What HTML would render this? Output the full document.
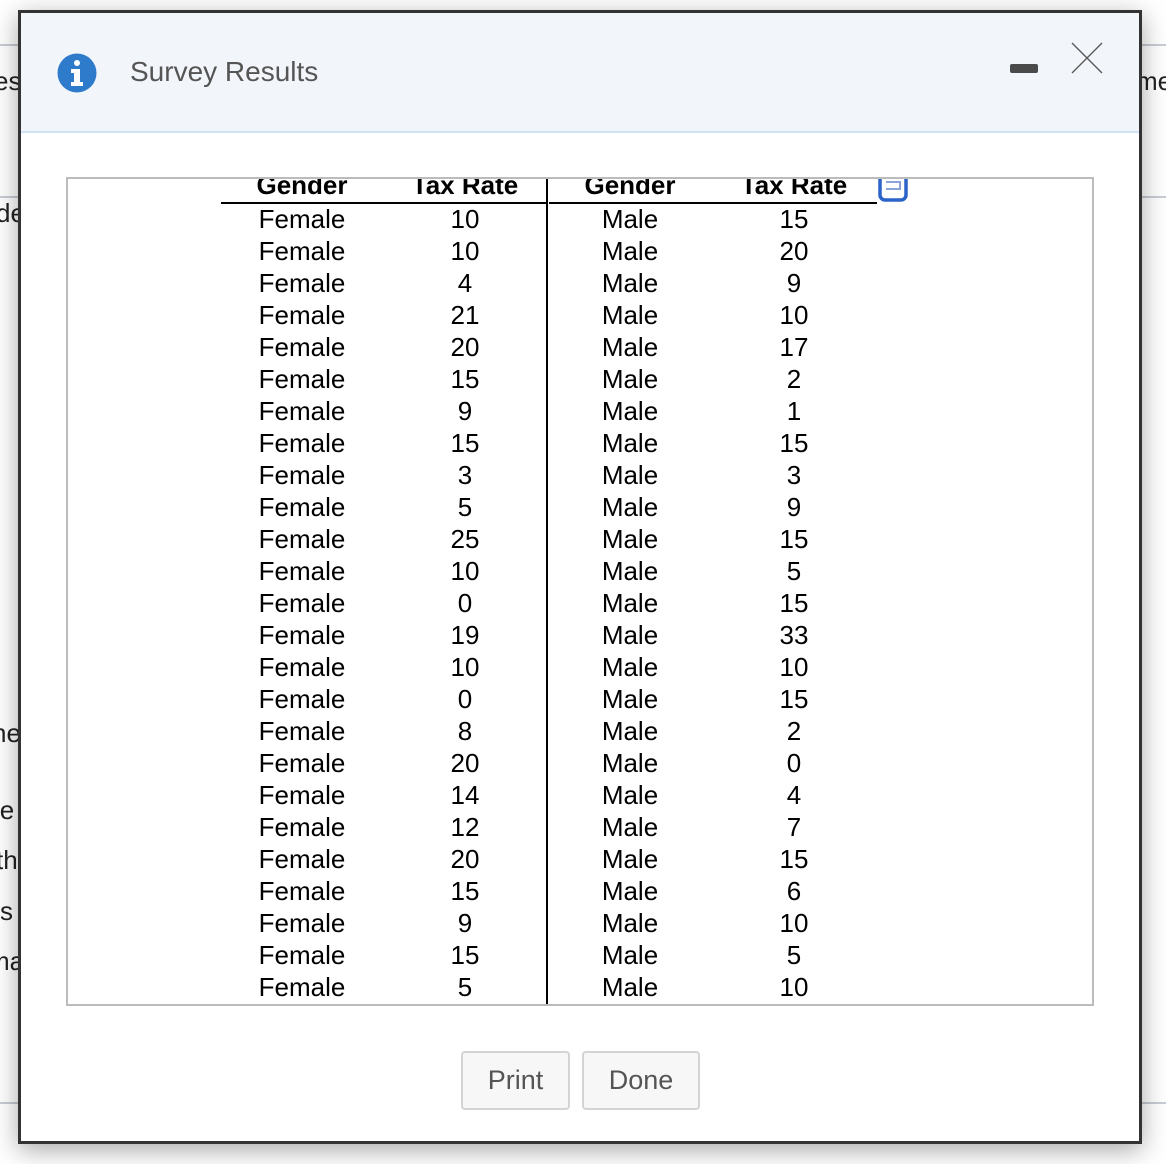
<!DOCTYPE html>
<html><head><meta charset="utf-8"><style>
*{margin:0;padding:0;box-sizing:border-box}
body{width:1166px;height:1164px;position:relative;overflow:hidden;background:#fff;font-family:"Liberation Sans",Arial,sans-serif}
.bg{position:absolute;font-size:26px;color:#222}
.hl{position:absolute;height:2px;background:#c8ccd4}
.dlg{position:absolute;left:18px;top:10px;width:1124px;height:1134px;border:3px solid #333;background:#fff;box-shadow:0 6px 24px rgba(0,0,0,.35)}
.hdr{position:absolute;left:0;top:0;width:1118px;height:120px;background:#f2f5fa;border-bottom:2px solid #d0e3f4}
.box{position:absolute;left:45px;top:164px;width:1028px;height:829px;border:2px solid #bbb;overflow:hidden}
.t{position:absolute;font-size:26px;color:#000;line-height:32px;text-align:center;width:200px}
.btn{position:absolute;top:1038px;height:59px;border:2px solid #d4d4d4;border-radius:4px;background:#f7f7f7;font-size:27px;color:#555;text-align:center;line-height:55px}
</style></head><body>
<div class="hl" style="left:0;top:44px;width:1166px"></div>
<div class="hl" style="left:0;top:196px;width:1166px"></div>
<div class="hl" style="left:0;top:1102px;width:1166px"></div>
<div class="bg" style="left:-6px;top:66px">es</div>
<div class="bg" style="left:-4px;top:198px">de</div>
<div class="bg" style="left:-8px;top:718px">he</div>
<div class="bg" style="left:-6px;top:795px">le</div>
<div class="bg" style="left:-4px;top:845px">th</div>
<div class="bg" style="left:0;top:896px">s</div>
<div class="bg" style="left:-12px;top:946px">ma</div>
<div class="bg" style="left:1136px;top:66px">me</div>
<div class="dlg">
 <div class="hdr">
  <svg style="position:absolute;left:36px;top:40px" width="40" height="40" viewBox="0 0 40 40"><circle cx="20" cy="20" r="19.5" fill="#2f7bcb"/><circle cx="20" cy="10" r="3" fill="#fff"/><path d="M14 16h9v13h3v4H14v-4h3v-9h-3z" fill="#fff"/></svg>
  <div style="position:absolute;left:109px;top:43px;font-size:28px;color:#555">Survey Results</div>
  <div style="position:absolute;left:989px;top:51px;width:28px;height:9px;background:#4a4a4a;border-radius:2px"></div>
  <svg style="position:absolute;left:1050px;top:29px" width="32" height="32" viewBox="0 0 32 32"><path d="M1 1L31 31M31 1L1 31" stroke="#555" stroke-width="1.3"/></svg>
 </div>
 <div class="box" id="box">
  <div style="position:absolute;left:153px;top:23px;width:327px;height:2px;background:#000"></div>
  <div style="position:absolute;left:481px;top:23px;width:328px;height:2px;background:#000"></div>
  <div style="position:absolute;left:478px;top:0;width:2px;height:829px;background:#000"></div>
  <svg style="position:absolute;left:810px;top:-2px" width="30" height="26" viewBox="0 0 30 26"><rect x="2" y="-4" width="26" height="27" rx="5" fill="none" stroke="#2b63c8" stroke-width="3.5"/><path d="M8 5h14v7H8" fill="none" stroke="#8aa3d8" stroke-width="2"/></svg>
 </div>
 <div class="btn" style="left:440px;width:109px">Print</div>
 <div class="btn" style="left:561px;width:118px">Done</div>
</div>
<script>
var f=[10,10,4,21,20,15,9,15,3,5,25,10,0,19,10,0,8,20,14,12,20,15,9,15,5];
var m=[15,20,9,10,17,2,1,15,3,9,15,5,15,33,10,15,2,0,4,7,15,6,10,5,10];
var b=document.getElementById('box'),h='';
var cx=[234,397,562,726];
function c(x,y,t,bold){return '<div class="t" style="left:'+(x-100)+'px;top:'+y+'px'+(bold?';font-weight:bold':'')+'">'+t+'</div>';}
h+=c(cx[0],-10,'Gender',1)+c(cx[1],-10,'Tax Rate',1)+c(cx[2],-10,'Gender',1)+c(cx[3],-10,'Tax Rate',1);
for(var i=0;i<25;i++){var y=24+32*i;h+=c(cx[0],y,'Female')+c(cx[1],y,f[i])+c(cx[2],y,'Male')+c(cx[3],y,m[i]);}
b.insertAdjacentHTML('beforeend',h);
</script>
</body></html>
